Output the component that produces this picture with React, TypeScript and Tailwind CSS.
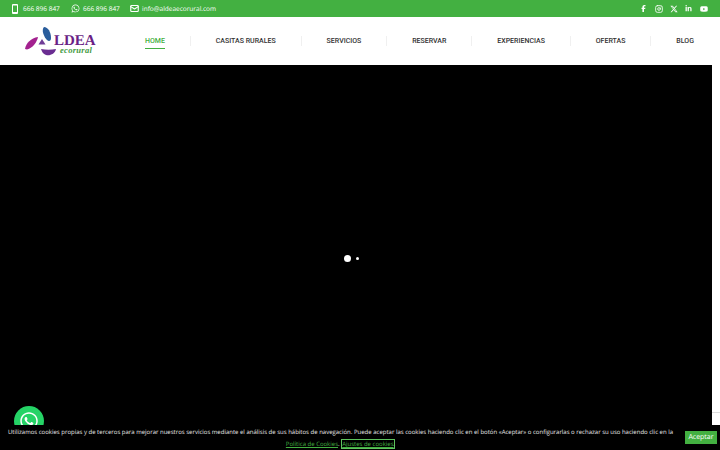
import React from "react";
import { Mail, Instagram } from "lucide-react";
import { FaWhatsapp, FaXTwitter, FaFacebookF, FaLinkedinIn, FaYoutube } from "react-icons/fa6";

const nav = [
  { t: "HOME", active: true },
  { t: "CASITAS RURALES" },
  { t: "SERVICIOS" },
  { t: "RESERVAR" },
  { t: "EXPERIENCIAS" },
  { t: "OFERTAS" },
  { t: "BLOG" },
];

function Logo() {
  return (
    <div className="relative w-[70px] h-[32px]">
      <svg width="32" height="32" viewBox="0 0 32 32" className="absolute left-0 top-0">
        <path d="M19 2 C23 2 26 7 26 13 C26 16 24 17 22 15 C19 12 16 5 19 2Z" fill="#2a5d9c" />
        <path d="M0 24 C1 18 6 13 13 12 C12 17 8 23 2 24.5Z" fill="#a3218f" />
        <path d="M17 14 L20.5 19.5 L13.5 19.5Z" fill="#6f3d97" />
        <path d="M16 24 C21 25 26 25 31 24 C30 29 25 31 21 30 C18 29 17 27 16 24Z" fill="#6a2d91" />
      </svg>
      <span className="absolute left-[29px] top-[10px] text-[15px] leading-[12px] font-bold text-[#6a1f86] whitespace-nowrap font-['Liberation_Serif',serif]">LDEA</span>
      <span className="absolute left-[35px] top-[22px] text-[8.5px] leading-[6px] italic font-bold text-[#3f9a3f] tracking-[0.3px] whitespace-nowrap font-['Liberation_Serif',serif]">ecorural</span>
    </div>
  );
}

export default function App() {
  return (
    <div className="relative w-[720px] h-[450px] overflow-hidden bg-white font-['Roboto',sans-serif] [text-rendering:geometricPrecision]">
      <div className="h-[17px] bg-[#43b041] flex items-center justify-between pl-[12px] pr-[9px] text-white">
        <div className="flex items-center text-[6.5px] font-['Open_Sans',sans-serif]">
          <svg width="6" height="10" viewBox="0 0 6 10" className="mr-[5px]">
            <path d="M1 0h4a1 1 0 0 1 1 1v8a1 1 0 0 1-1 1H1a1 1 0 0 1-1-1V1a1 1 0 0 1 1-1Zm0 1.5v6.5h4V1.5H1Z" fill="#fff" fillRule="evenodd" />
          </svg>
          <span className="w-[48px]">666 896 847</span>
          <FaWhatsapp size={9} className="mr-[3px]" />
          <span className="w-[47px]">666 896 847</span>
          <Mail size={9} strokeWidth={3} className="mr-[3px]" />
          <span>info@aldeaecorural.com</span>
        </div>
        <div className="flex items-center">
          <span className="w-[15px] flex justify-center"><FaFacebookF size={7} /></span>
          <span className="w-[15px] flex justify-center"><Instagram size={8} strokeWidth={2.5} /></span>
          <span className="w-[15px] flex justify-center"><FaXTwitter size={8} /></span>
          <span className="w-[15px] flex justify-center"><FaLinkedinIn size={7} /></span>
          <span className="w-[15px] flex justify-center"><FaYoutube size={8} /></span>
        </div>
      </div>
      <div className="h-[48px] flex items-center pl-[25px] pr-[26px]">
        <Logo />
        <nav className="flex-1 flex items-center justify-between ml-[50px]">
          {nav.map((n, i) => (
            <React.Fragment key={n.t}>
              {i > 0 && <span className="w-px h-[10px] bg-[#f0f0f0]" />}
              <span className={`relative text-[7px] font-medium leading-[10px] whitespace-nowrap ${n.active ? "text-[#43b041]" : "text-[#333333]"}`}>
                {n.t}
                {n.active && <span className="absolute left-0 right-0 top-[12px] h-px bg-[#43b041]" />}
              </span>
            </React.Fragment>
          ))}
        </nav>
      </div>
      <div className="flex h-[385px]">
        <div className="w-[712px] bg-black flex items-center justify-center">
          <div className="flex items-center gap-[5px] ml-[-9px] mt-[2px]">
            <span className="w-[7px] h-[7px] rounded-full bg-white" />
            <span className="w-[3px] h-[3px] rounded-full bg-white" />
          </div>
        </div>
        <div className="flex-1 pt-[347px]">
          <div className="h-px bg-[#dddddd]" />
        </div>
      </div>
      <div className="absolute left-[14px] top-[406px] w-[30px] h-[30px] rounded-full bg-[#25d366] flex items-center justify-center">
        <FaWhatsapp size={20} color="#fff" />
      </div>
      <div className="absolute left-0 right-0 bottom-0 h-[25px] bg-black flex items-start">
        <div className="flex-1 min-w-0 pr-[4px] pt-[1px] text-center text-[#e8e8e8] text-[6px] leading-[12px] font-['Open_Sans',sans-serif]">
          <div className="whitespace-nowrap">Utilizamos cookies propias y de terceros para mejorar nuestros servicios mediante el análisis de sus hábitos de navegación. Puede aceptar las cookies haciendo clic en el botón «Aceptar» o configurarlas o rechazar su uso haciendo clic en la</div>
          <div className="whitespace-nowrap text-[#43b041]">
            <span className="underline">Política de Cookies</span>
            <span className="text-[#e8e8e8]">. </span>
            <span className="underline outline outline-1 outline-[#5ec35e] ml-[1px]">Ajustes de cookies</span>
            <span className="text-[#e8e8e8]">.</span>
          </div>
        </div>
        <div className="mr-[3px] mt-[6px] w-[32px] h-[13px] bg-[#43b041] text-white text-[7px] leading-[13px] text-center font-['Open_Sans',sans-serif]">Aceptar</div>
      </div>
    </div>
  );
}
